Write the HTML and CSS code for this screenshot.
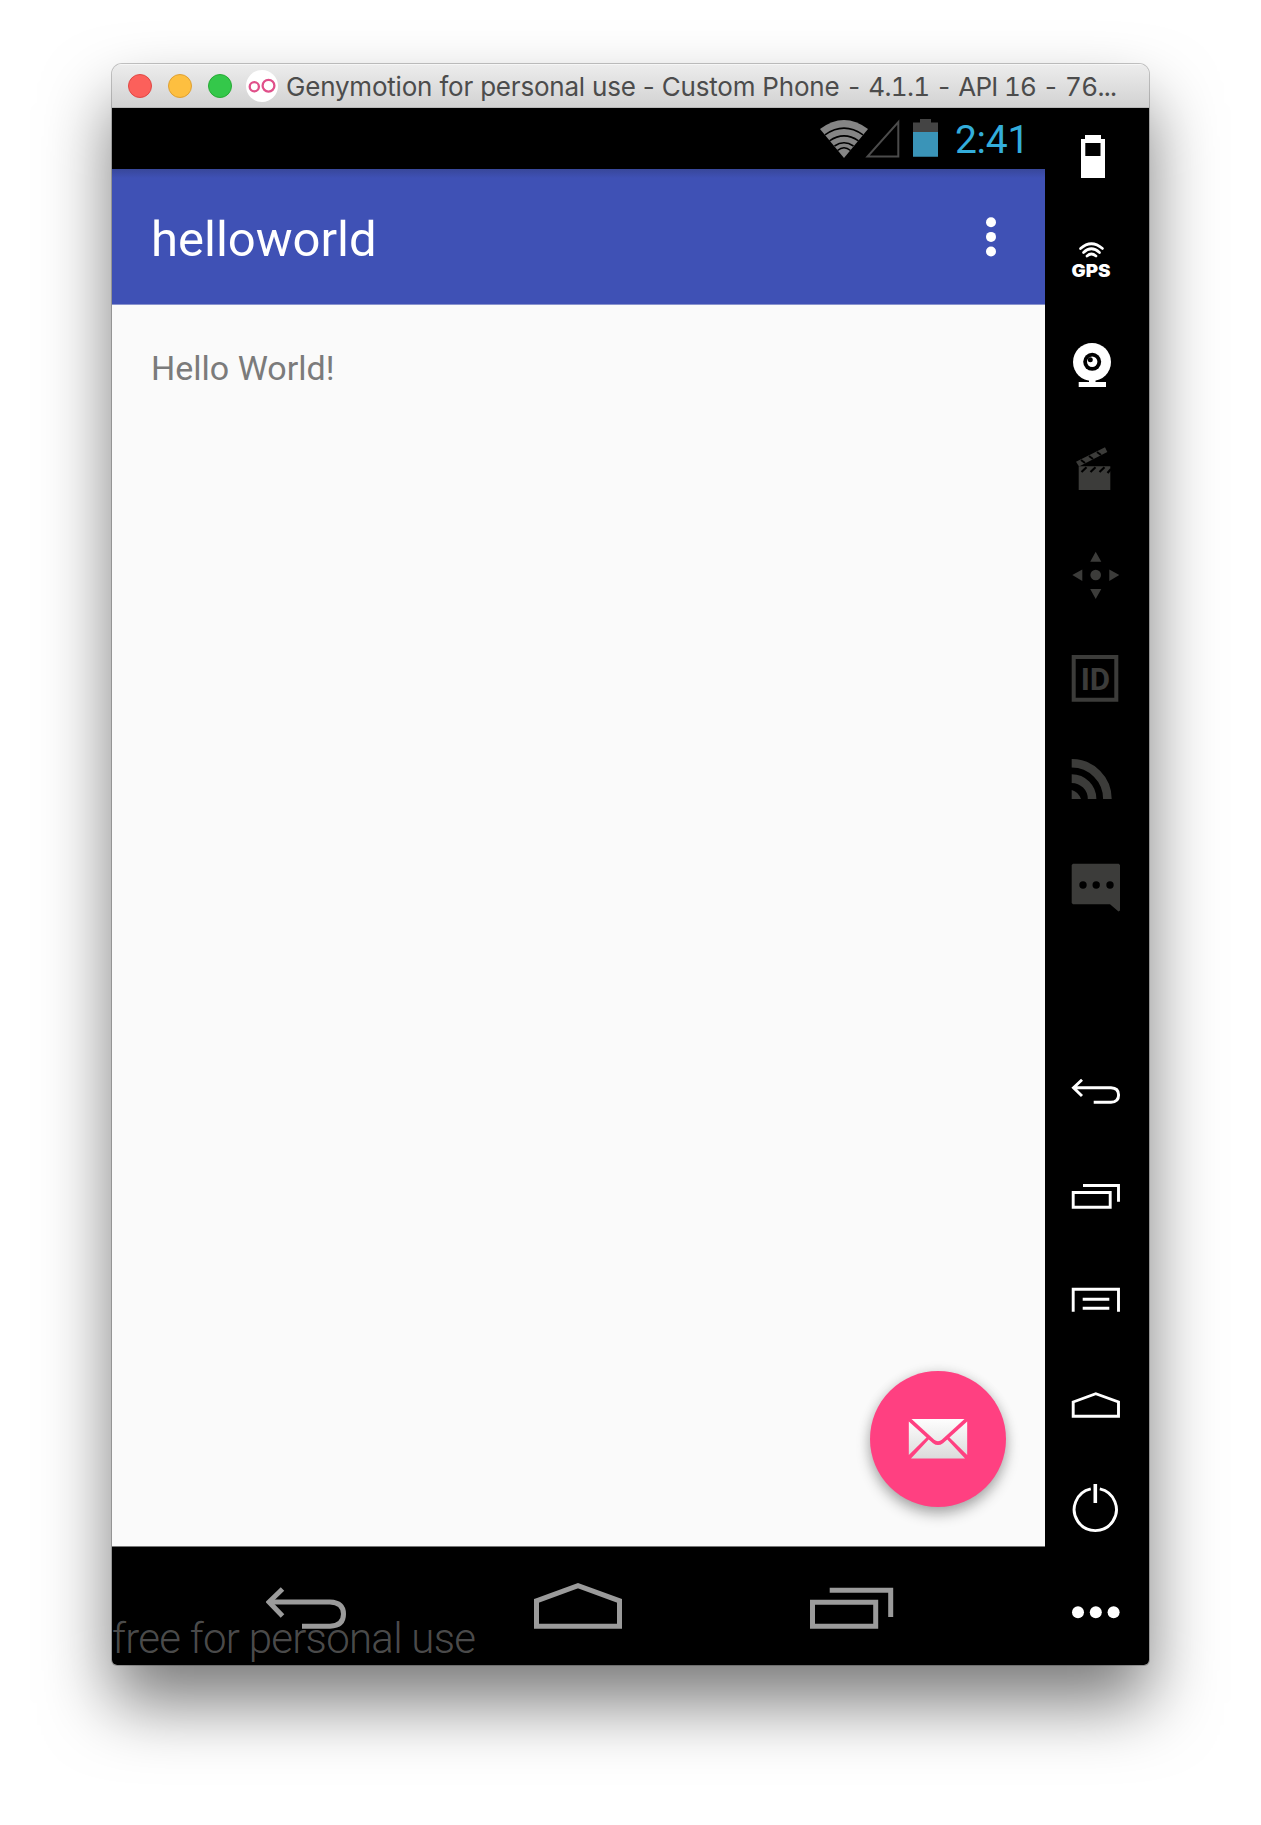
FILE: index.html
```html
<!DOCTYPE html>
<html lang="en">
<head>
<meta charset="utf-8">
<title>Genymotion for personal use</title>
<link rel="stylesheet" href="styles.css">
</head>
<body>
<main class="window">
  <header class="titlebar">
    <span class="light light-close"></span>
    <span class="light light-minimize"></span>
    <span class="light light-zoom"></span>
    <svg class="app-logo" width="32" height="32" viewBox="0 0 32 32"><circle cx="16" cy="16" r="16" fill="#fff"/><g fill="none" stroke="#e0508a" stroke-width="2.300"><circle cx="8.300" cy="16.700" r="4.600"/><circle cx="22.500" cy="15.700" r="5.900"/></g></svg>
    <h1 class="window-title">Genymotion for personal use - Custom Phone<span class="version"> - 4.1.1 - API 16 - 76...</span></h1>
  </header>
  <div class="device">
    <section class="screen">
      <div class="statusbar">
        <svg class="wifi" width="48" height="38" viewBox="0 0 48 38">
          <path d="M0 9Q24-9 48 9L24 38Z" fill="#858585"/>
          <g fill="none" stroke="#000" stroke-width="1.600"><path d="M5 14.800Q24 1.500 43 14.800"/><path d="M9.500 20.800Q24 11 38.500 20.800"/><path d="M14.500 26Q24 19.500 33.500 26"/><path d="M17.500 30.500Q24 25 30.500 30.500"/></g>
        </svg>
        <svg class="signal" width="35" height="39" viewBox="0 0 35 39"><path d="M2.500 37.500H33.300V3Z" fill="none" stroke="#4b4b4b" stroke-width="2"/></svg>
        <svg class="battery" width="25" height="38" viewBox="0 0 25 38"><path d="M0 3.500H7V0H18V3.500H25V13H0Z" fill="#444"/><path d="M0 13H25V37.700H0Z" fill="#3a94b8"/></svg>
        <span class="clock">2:41</span>
      </div>
      <div class="appbar">
        <h2 class="app-title">helloworld</h2>
        <svg width="10" height="40" viewBox="0 0 10 40" fill="#fff"><circle cx="5" cy="5.200" r="5"/><circle cx="5" cy="19.900" r="5"/><circle cx="5" cy="34.500" r="5"/></svg>
      </div>
      <div class="content">
        <p class="greeting">Hello World!</p>
        <div class="fab">
          <svg width="60" height="42" viewBox="0 0 60 42">
            <defs><linearGradient id="paper" x1="0" y1="0" x2="0" y2="42" gradientUnits="userSpaceOnUse"><stop offset="0" stop-color="#fff"/><stop offset="1" stop-color="#dadada"/></linearGradient></defs>
            <g fill="url(#paper)"><path d="M3.500 1H56.500L34 21.500Q30 25 26 21.500Z"/><path d="M.8 3.500L18.500 19.500L.8 37Z"/><path d="M59.200 3.500L41.500 19.500L59.200 37Z"/><path d="M20.700 21.500L25 25.200Q30 29 35 25.200L39.300 21.500L57 40.500H3Z"/></g>
          </svg>
        </div>
      </div>
      <nav class="navbar">
        <svg width="80" height="46" viewBox="0 0 80 46" fill="none" stroke="#9b9b9b" stroke-width="5"><path d="M4 19H64Q77.500 19.500 77.500 31Q77.500 42.800 64 43.200H36"/><path d="M16.500 6L3 19L16.500 33" /></svg>
        <svg width="88" height="46" viewBox="0 0 88 46" fill="none" stroke="#9b9b9b" stroke-width="5"><path d="M2.500 17.800L44 2.700L85.500 17.800V43.300H2.500Z"/></svg>
        <svg width="84" height="46" viewBox="0 0 84 46" fill="none" stroke="#9b9b9b" stroke-width="5"><path d="M2.500 19.300H65.700V43.300H2.500Z"/><path d="M19.700 7.200H80.700V34"/></svg>
        <span class="watermark">free for personal use</span>
      </nav>
    </section>
    <aside class="toolbar">
      <svg class="tool tool-first" viewBox="0 4 104 100" fill="#fff"><path fill-rule="evenodd" d="M40 31H56V35H60V74H36V35H40ZM40.300 39V52H55.500V39Z"/></svg>
      <svg class="tool" viewBox="0 0 104 104"><g fill="none" stroke="#fff" stroke-width="2.700" stroke-linecap="round"><path d="M35.500 40.500Q46.300 31 57.500 40.500"/><path d="M38.500 44.500Q46.300 37 54.500 44.500"/><path d="M42 48Q46.300 44 51 48"/></g><text class="gps-label" x="26.500" y="68.700" textLength="39" lengthAdjust="spacingAndGlyphs">GPS</text></svg>
      <svg class="tool" viewBox="0 0 104 104" fill="#fff"><circle cx="47" cy="50" r="19"/><path d="M44 67H50.500V70H61V75H33.700V70H44Z"/><circle cx="47.200" cy="49.800" r="9" fill="#000"/><circle cx="47.200" cy="49.800" r="5.200"/><circle cx="45.300" cy="47.700" r="2.500" fill="#000"/></svg>
      <svg class="tool" viewBox="0 0 104 104" fill="#3c3c3a"><path d="M33.700 50.300H65.300V74H33.700Z"/><path d="M31 45.700L60 31.300L62.300 36L34 50.500Z"/><g stroke="#000" stroke-width="2.200"><path d="M36.500 56L41.500 51.300M45.500 56L50.500 51.300M54.500 56L59.500 51.300M62.500 57L66 53"/><path d="M36 44L40 47M44 40L48 43M52 36L56 39" stroke-width="2"/></g></svg>
      <svg class="tool" viewBox="0 0 104 104" fill="#3c3c3a"><circle cx="50.700" cy="55" r="5.300"/><path d="M50.700 31.700L56.300 41.700H45.200ZM50.700 79L56.300 69H45.200ZM27.300 55L37.300 49.500V61ZM74.300 55L64.300 49.500V61Z"/></svg>
      <svg class="tool" viewBox="0 0 104 104"><path d="M28.700 33H71.300V75.700H28.700Z" fill="none" stroke="#3c3c3a" stroke-width="4"/><text class="id-label" x="35.700" y="66" textLength="29.500" lengthAdjust="spacingAndGlyphs">ID</text></svg>
      <svg class="tool" viewBox="0 0 104 104"><path d="M26.700 71V62Q33 63.500 36 71Z" fill="#3c3c3a"/><g fill="none" stroke="#3c3c3a" stroke-width="8.600"><path d="M26.700 50.600A20.400 20.400 0 0 1 47.100 71"/><path d="M26.700 35.300A35.700 35.700 0 0 1 62.400 71"/></g></svg>
      <svg class="tool" viewBox="0 0 104 104" fill="#3c3c3a"><path d="M28 31.700H73.700L75 33V78.500L73.500 79.500L65 72.300H28L26.700 71V33Z"/><g fill="#000"><circle cx="38" cy="53" r="3.700"/><circle cx="51.200" cy="53" r="3.700"/><circle cx="65" cy="53" r="3.700"/></g></svg>
      <span class="tool"></span>
      <svg class="tool line" viewBox="0 0 104 104"><path d="M28.500 47.700H66Q73.600 48 73.600 55Q73.600 62 66 62.300H48.700M37 39.700L28.500 47.700L37 56"/></svg>
      <svg class="tool line" viewBox="0 0 104 104"><path d="M28.200 48.500H65.200V63.200H28.200ZM38 41.500H73.500V57.700"/></svg>
      <svg class="tool line" viewBox="0 0 104 104"><path d="M28.200 63.700V41.200H73.500V63.700M37.700 51.200H64.300M37.700 60.300H64.300"/></svg>
      <svg class="tool line" viewBox="0 0 104 104"><path d="M28.200 50L50.800 41.700L73.500 50V64.300H28.200Z"/></svg>
      <svg class="tool line" viewBox="0 0 104 104"><path d="M45.800 32.900A21.100 21.100 0 1 0 54.800 32.900"/><path d="M50.300 28V47" stroke-width="3.600"/></svg>
      <svg class="tool" viewBox="0 0 104 104" fill="#fff"><circle cx="33" cy="52.300" r="6"/><circle cx="50.800" cy="52.300" r="6"/><circle cx="68.600" cy="52.300" r="6"/></svg>
    </aside>
  </div>
</main>
</body>
</html>
```
FILE: styles.css
```css
* { box-sizing: border-box; }
body {
  margin: 0;
  height: 1825px;
  padding: 64px 0 0 112px;
  background: #fff;
  font-family: Roboto, sans-serif;
  overflow: hidden;
}
h1, h2, p { margin: 0; font-weight: 400; white-space: nowrap; }
svg { display: block; flex: none; }

.window {
  width: 1037px;
  height: 1601px;
  border-radius: 10px 10px 5px 5px;
  box-shadow: 0 0 0 1px rgba(0, 0, 0, .22), 0 38px 68px rgba(0, 0, 0, .52);
  overflow: hidden;
}
.titlebar {
  display: flex;
  align-items: center;
  height: 44px;
  padding-left: 16px;
  background: linear-gradient(#ececec, #d2d2d2);
  border-top: 1px solid #f6f6f6;
  border-bottom: 1px solid #b8b8b8;
}
.light {
  width: 24px;
  height: 24px;
  margin-right: 16px;
  border-radius: 50%;
  border: 1px solid;
}
.light-close { background: #fc605b; border-color: #df4845; }
.light-minimize { background: #fdbf40; border-color: #dea033; }
.light-zoom { background: #34c84a; border-color: #27aa35; }
.app-logo { margin-left: -2px; }
.window-title {
  margin-left: 8px;
  padding-top: 2px;
  font: 400 26px/40px Inter, sans-serif;
  letter-spacing: -.2px;
  color: #4c4c4c;
}
.version { font-feature-settings: "tnum"; font-kerning: none; letter-spacing: -.68px; white-space: pre; }

.device { display: flex; height: 1557px; background: #000; }
.screen { display: flex; flex-direction: column; width: 933px; }
.statusbar { display: flex; height: 61px; padding-left: 708px; background: #000; }
.wifi { margin-top: 12px; }
.signal { margin: 11px 0 0 -3px; }
.battery { margin: 11px 0 0 13px; }
.clock { margin-left: 17px; font-size: 39px; line-height: 64px; letter-spacing: -.3px; color: #33addb; }

.appbar {
  display: flex;
  align-items: center;
  justify-content: space-between;
  height: 136px;
  padding: 0 49px 0 39px;
  background: linear-gradient(#38479a, #3f51b5 9px);
  border-bottom: 1px solid #8993cd;
}
.app-title { font-size: 49px; line-height: 60px; color: #fff; padding-top: 6px; }

.content { position: relative; height: 1242px; padding: 43px 39px; background: #fafafa; border-bottom: 1px solid #777; }
.greeting { font-size: 34px; line-height: 40px; color: #7b7b7b; }
.fab {
  position: absolute;
  right: 39px;
  bottom: 39px;
  display: flex;
  align-items: center;
  justify-content: center;
  width: 136px;
  height: 136px;
  border-radius: 50%;
  background: #ff4081;
  box-shadow: 0 7px 14px rgba(0, 0, 0, .3), 0 0 12px rgba(0, 0, 0, .1);
}

.navbar { position: relative; display: flex; gap: 188px; height: 118px; padding: 36px 0 0 154px; }
.watermark {
  position: absolute;
  left: 0;
  bottom: 1px;
  font-size: 42px;
  line-height: 50px;
  font-weight: 300;
  letter-spacing: -.73px;
  color: rgba(125, 125, 125, .62);
  white-space: nowrap;
}

.toolbar { display: flex; flex-direction: column; width: 104px; }
.tool { flex: none; width: 104px; height: 104px; }
.tool-first { height: 100px; }
.line { fill: none; stroke: #fff; stroke-width: 2.9px; }
.gps-label { font: 900 17.500px Inter, sans-serif; fill: #fff; }
.id-label { font: 700 30.500px Roboto, sans-serif; fill: #3c3c3a; }
```
